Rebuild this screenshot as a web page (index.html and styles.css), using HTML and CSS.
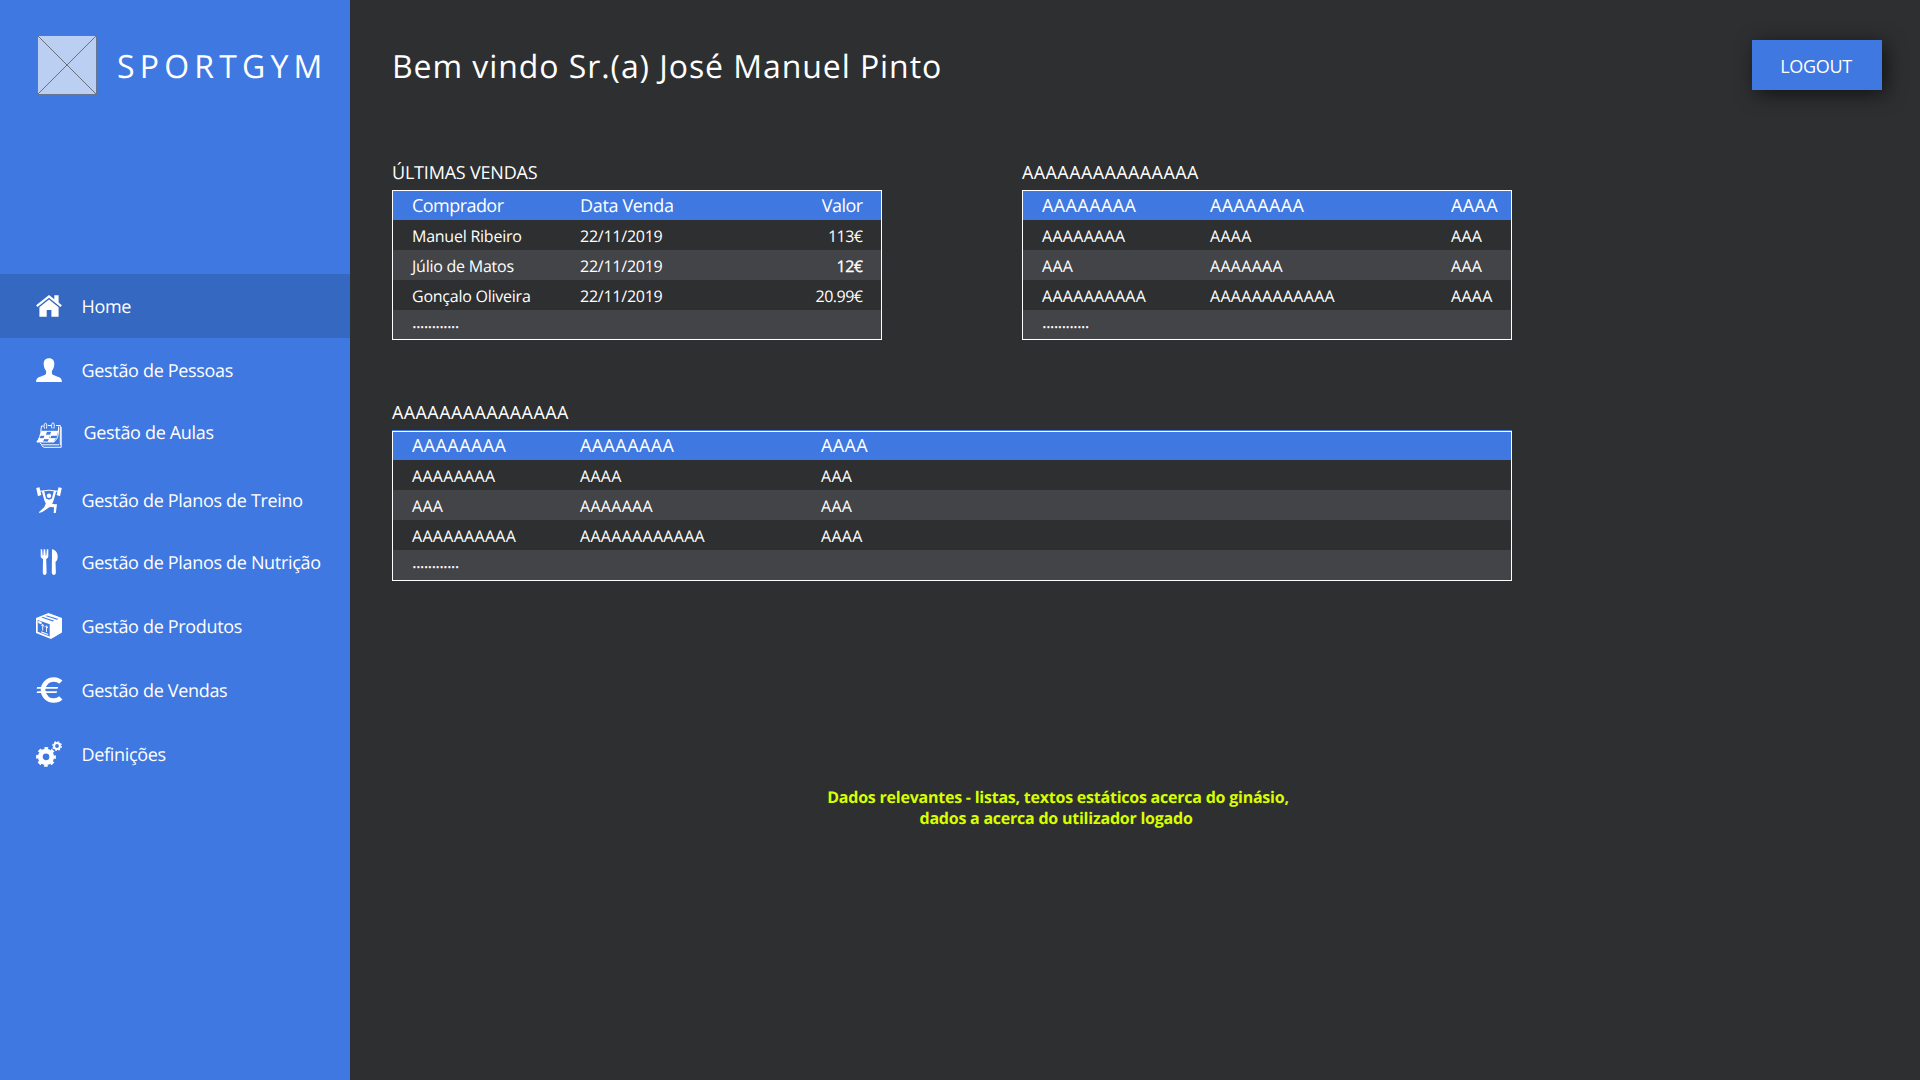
FILE: index.html
```
<!DOCTYPE html>
<html lang="pt">
<head>
<meta charset="utf-8">
<title>SportGym</title>
<link rel="stylesheet" href="styles.css">
</head>
<body>
<aside class="sidebar">
  <div class="brand">
    <svg class="brand-logo" viewBox="0 0 60 60"><rect class="logo-box" x=".5" y=".5" width="59" height="59"/><path class="logo-cross" d="M.5.5l59 59M59.5.5l-59 59"/></svg>
    <span class="brand-name">SPORTGYM</span>
  </div>
  <nav class="menu">
    <a class="item active">
      <svg class="icon" viewBox="0 0 26 26"><path class="line roof" d="M.8 13.1L13 3.3l12.2 9.8"/><path d="M18.3 2.3h4.3v8.3l-4.3-3.4zM13 6.6l9.6 7.7v9.4h-7.2V17h-4.7v6.7H3.4v-9.4z"/></svg>
      <span class="label">Home</span>
    </a>
    <a class="item">
      <svg class="icon" viewBox="0 0 26 26"><path d="M13 1.2c3.6 0 5.4 2.4 5.3 5.8-.1 3.300-1 5.300-2.400 6.900v2.600c.3 1.300 2 1.800 4.600 2.700 3.300 1.100 5.400 2 5.400 5.700H.1c0-3.700 2.100-4.600 5.400-5.700 2.600-.9 4.300-1.400 4.600-2.700v-2.600C8.700 12.300 7.800 10.300 7.700 7 7.600 3.600 9.400 1.200 13 1.200z"/></svg>
      <span class="label">Gestão de Pessoas</span>
    </a>
    <a class="item classes">
      <svg class="icon" viewBox="0 0 26 26"><path class="line thin" d="M8.500 6.500C7.500 4 8.200 1.200 9.600 1.200S11 4 10.400 6.500M16 6.500C15 4 15.700.8 17.100.8S18.500 4 17.900 6.500M5.500 4h2M12 3.500h3M20 3.500h4.300v19.700M5.500 4L4.700 9.500M22.500 4.500V9c0 6-2.500 9.500-4.500 11H.8C3 17.500 4.700 13 5.200 9.300h17M3.500 13.200h17.700M2.400 16.700h17.500M10.700 9.300L6.500 20M16.500 9.300L12.500 20M4 21l2 1.800h17M5.500 23.500L8 25.300h17.200V5"/><path d="M5.300 9.300h5.200l-1.300 3.900H4zM15.300 9.300h6.800l-.9 3.900h-7.300zM9.200 13.200h5l-1.500 3.500h-5zM2.500 16.700h5L6.300 20H1zM13 16.700h6.500L17.700 20h-6z"/></svg>
      <span class="label">Gestão de Aulas</span>
    </a>
    <a class="item training">
      <svg class="icon" viewBox="0 0 26 26"><path d="M.2 1.100L3.500.2l1.800 7.900L2 9.200zM25.800 1.100L22.500.2l-1.800 7.900L24 9.200z"/><path class="line thin" d="M4 4.300q9-2.200 18 0"/><circle cx="13" cy="8.700" r="2.200"/><path d="M5.800 4.300l2.300-.6 2 7.800 2.900 1.200 2.900-1.200 2-7.800 2.300.6-2.500 9-1.500 3.700 4.800.3-1.200 8.700h-2.100l.3-5.700-4.300-.3L6.400 24.900 2.800 26l.5-1.300 4.900-4.500 1.600-3.600-1.500-3.300z"/></svg>
      <span class="label">Gestão de Planos de Treino</span>
    </a>
    <a class="item">
      <svg class="icon" viewBox="0 0 26 26"><path d="M4.700.2h1.500l.5 6.300h.6L7.700.2h1.500l.5 6.300h.6l.5-6.300h1.500v7c0 1.600-1 2.300-2.100 2.700l.4 13.600c.1 3.200-3.900 3.200-3.800 0L7 9.900C5.700 9.500 4.700 8.800 4.700 7.200zM16 .2c3.600.7 5.700 3.500 5.700 7.400 0 2.500-.7 4.200-2.200 5.400l.4 10.500c.1 3.200-4.200 3.200-4.100 0z"/></svg>
      <span class="label">Gestão de Planos de Nutrição</span>
    </a>
    <a class="item">
      <svg class="icon" viewBox="0 0 26 26"><path fill-rule="evenodd" d="M12.500.1L26 5v14.500L15 25.900 0 20V5zM1.700 7v11.700l12 4.900V11.200zM5.300 4.600l11.500 3.800 1.500-.7L7 4zM9.500 3l11.400 3.700 1.500-.7L11 2.500z"/><path d="M2.300 7.800l3.300 1.300v2.300L2.300 10zM5.200 18.300l7 2.700v1.100l-7-2.600z"/><path class="line hair" d="M6.700 17.500v-5.700M5.400 12.800l1.300-1.500L8 13.600M10.500 19v-5.700M9.200 14.200l1.300-1.500 1.300 2.400"/></svg>
      <span class="label">Gestão de Produtos</span>
    </a>
    <a class="item">
      <svg class="icon" viewBox="0 0 26 26"><path class="line euro" d="M24.800 5.200C21.500 1.900 14.800 1.300 10.800 4.900 5.800 9.200 5.800 16.800 10.800 21.100c4 3.600 10.700 3 14-.3"/><path d="M1.300 10.100h20.900l-.7 1.700H.6zM1.300 14.300h19.900l-.7 1.700H.6z"/></svg>
      <span class="label">Gestão de Vendas</span>
    </a>
    <a class="item">
      <svg class="icon" viewBox="0 0 26 26"><circle class="line gear" cx="10" cy="15.900" r="5.700"/><circle class="line teeth" cx="10" cy="15.900" r="8.700"/><circle class="line small-gear" cx="21" cy="5" r="2.900"/><circle class="line small-teeth" cx="21" cy="5" r="4.300"/></svg>
      <span class="label">Definições</span>
    </a>
  </nav>
</aside>
<main class="main">
  <header class="top">
    <h1 class="welcome">Bem vindo Sr.(a) José Manuel Pinto</h1>
    <button class="logout">LOGOUT</button>
  </header>
  <div class="cards">
    <section class="card sales">
      <h2 class="title">ÚLTIMAS VENDAS</h2>
      <div class="table">
        <div class="row head"><span class="tight">Comprador</span><span>Data Venda</span><span class="tight">Valor</span></div>
        <div class="row"><span>Manuel Ribeiro</span><span>22/11/2019</span><span class="money">113€</span></div>
        <div class="row"><span>Júlio de Matos</span><span>22/11/2019</span><span class="money strong">12€</span></div>
        <div class="row"><span>Gonçalo Oliveira</span><span>22/11/2019</span><span class="money">20.99€</span></div>
        <div class="row more"><span>............</span></div>
      </div>
    </section>
    <section class="card filler">
      <h2 class="title">AAAAAAAAAAAAAAA</h2>
      <div class="table">
        <div class="row head"><span>AAAAAAAA</span><span>AAAAAAAA</span><span>AAAA</span></div>
        <div class="row"><span>AAAAAAAA</span><span>AAAA</span><span>AAA</span></div>
        <div class="row"><span>AAA</span><span>AAAAAAA</span><span>AAA</span></div>
        <div class="row"><span>AAAAAAAAAA</span><span>AAAAAAAAAAAA</span><span>AAAA</span></div>
        <div class="row more"><span>............</span></div>
      </div>
    </section>
    <section class="card filler wide">
      <h2 class="title">AAAAAAAAAAAAAAA</h2>
      <div class="table">
        <div class="row head"><span>AAAAAAAA</span><span>AAAAAAAA</span><span>AAAA</span></div>
        <div class="row"><span>AAAAAAAA</span><span>AAAA</span><span>AAA</span></div>
        <div class="row"><span>AAA</span><span>AAAAAAA</span><span>AAA</span></div>
        <div class="row"><span>AAAAAAAAAA</span><span>AAAAAAAAAAAA</span><span>AAAA</span></div>
        <div class="row more"><span>............</span></div>
      </div>
    </section>
  </div>
  <p class="note">Dados relevantes - listas, textos estáticos acerca do ginásio,<br>dados a acerca do utilizador logado&nbsp;</p>
</main>
</body>
</html>
```
FILE: styles.css
```
* { box-sizing: border-box; margin: 0; padding: 0; }
body {
  display: flex;
  height: 1080px;
  overflow: hidden;
  background: #2e2f31;
  color: #fff;
  font: 18px "Open Sans", "Noto Sans", sans-serif;
  text-rendering: geometricPrecision;
}

/* Sidebar */
.sidebar { flex: none; width: 350px; background: #3f78e0; }
.brand { display: flex; align-items: center; gap: 20px; height: 60px; margin: 35px 0 179px 37px; }
.brand-logo { width: 60px; height: 60px; }
.logo-box { fill: #bbcff3; stroke: #68778f; }
.logo-cross { fill: none; stroke: #6b6f78; stroke-width: 1; }
.brand-name { padding-top: 3px; font-size: 32px; line-height: 60px; letter-spacing: 5.2px; }

.item { display: flex; align-items: center; gap: 19.5px; height: 64px; padding-left: 36px; }
.item.active { background: #3568c0; }
.item.classes .icon { margin-top: 2px; }
.item.classes .label { margin: -4px 0 0 2px; }
.item.training { padding-top: 4px; }
.label { padding-top: 2px; letter-spacing: -.32px; white-space: nowrap; }
.icon { flex: none; width: 26px; height: 26px; fill: #fff; overflow: visible; }
.line { fill: none; stroke: #fff; }
.roof { stroke-width: 2.2; }
.thin { stroke-width: 1; }
.hair { stroke-width: .9; }
.euro { stroke-width: 4.6; }
.gear { stroke-width: 4.8; }
.teeth { stroke-width: 2.4; stroke-dasharray: 3.7 3.133; stroke-dashoffset: 1.85; }
.small-gear { stroke-width: 2; }
.small-teeth { stroke-width: 1.2; stroke-dasharray: 1.8 1.577; }

/* Page */
.main { flex: 1; padding-left: 42px; }
.top { display: flex; align-items: center; justify-content: space-between; height: 130px; padding-right: 38px; }
.welcome { padding-top: 3px; font-size: 32px; font-weight: 400; letter-spacing: .93px; }
.logout {
  width: 130px;
  height: 50px;
  padding: 1px 2px 0 0;
  border: 0;
  background: #3f78e0;
  color: #fff;
  font: inherit;
  letter-spacing: -.3px;
  box-shadow: 4px 4px 20px rgba(0, 0, 0, .6);
}

.cards { display: grid; grid-template-columns: 490px 490px; gap: 60px 140px; padding-top: 30px; }
.title { height: 24px; margin-bottom: 6px; font-size: 18px; font-weight: 400; line-height: 26px; letter-spacing: -.2px; }
.table { height: 150px; border: 1px solid #fff; }
.row {
  display: grid;
  grid-template-columns: 168px 241px auto;
  height: 30px;
  padding-left: 19px;
  font-size: 16px;
  line-height: 32px;
  letter-spacing: -.24px;
  white-space: nowrap;
}
.row:nth-child(odd) { background: #434447; }
.row.head { height: 29px; background: #3f78e0; font-size: 18px; line-height: 30px; letter-spacing: -.34px; }
.row.more { height: 29px; font-size: 18px; line-height: 25px; letter-spacing: -.85px; }
.row .tight { letter-spacing: -.55px; }

.sales .row { grid-template-columns: 168px 200px 1fr; padding-right: 18.5px; }
.sales .row span:nth-child(3) { text-align: right; }
.row .money { letter-spacing: -.5px; }
.strong { -webkit-text-stroke: .3px #fff; }

.filler .title { letter-spacing: .4px; }
.filler .row { letter-spacing: .3px; }
.filler .head { letter-spacing: .4px; }
.filler .more { letter-spacing: -.85px; }

.wide { grid-column: 1 / 3; }
.wide .title { margin-bottom: 7px; }
.wide .table { box-shadow: 0 -1px #3f78e0; }
.wide .row.head { height: 28px; line-height: 28px; }
.wide .row.more { height: 30px; line-height: 24px; }

.note {
  width: 490px;
  margin: 206px 0 0 421px;
  color: #d8ff00;
  font-size: 16px;
  font-weight: 700;
  line-height: 21px;
  letter-spacing: -.23px;
  text-align: center;
  white-space: nowrap;
}
```
